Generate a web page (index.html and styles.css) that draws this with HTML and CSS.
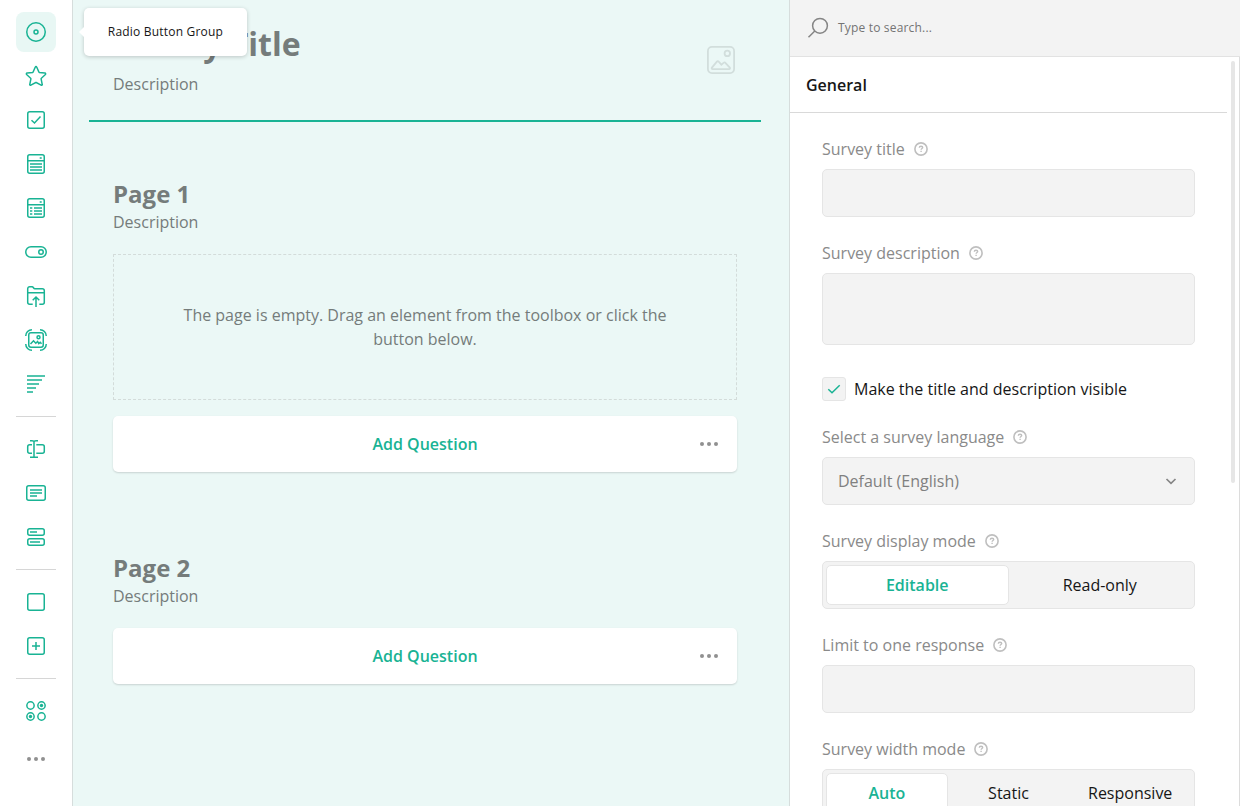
FILE: index.html
```html
<!DOCTYPE html>
<html lang="en">
<head>
<meta charset="utf-8">
<title>Survey Creator</title>
<link rel="stylesheet" href="styles.css">
</head>
<body>
<svg class="symbols" aria-hidden="true">
  <symbol id="help" viewBox="0 0 14 14"><circle cx="7" cy="7" r="6.1" stroke-width="1.6"/><path d="M5.3 5.8C5.3 4.7 6 4.2 7 4.2s1.7.5 1.7 1.3c0 1-1.6 1.1-1.6 2.3M7.1 8.8v1.3" stroke-width="1.4"/></symbol>
  <symbol id="dots" viewBox="0 0 24 24"><circle cx="5" cy="12" r="2"/><circle cx="12" cy="12" r="2"/><circle cx="19" cy="12" r="2"/></symbol>
</svg>
<div class="app">
  <nav class="toolbox">
    <a class="tool tool--active"><svg class="icon" viewBox="0 0 24 24"><circle cx="12" cy="12" r="9.25"/><circle cx="12" cy="12" r="2"/></svg>
      <span class="tooltip">Radio Button Group</span></a>
    <a class="tool"><svg class="icon" viewBox="0 0 24 24"><path d="M12 2.6c.3 0 .6.2.7.5l2.2 5 .5.4 5.5.6c.8.1 1 .9.5 1.4l-4.1 3.8-.2.6 1.1 5.4c.2.7-.5 1.2-1.1.9l-4.8-2.7h-.6l-4.8 2.7c-.6.3-1.3-.2-1.1-.9l1.1-5.4-.2-.6-4.1-3.8c-.5-.5-.3-1.3.5-1.4l5.5-.6.5-.4 2.2-5c.1-.3.4-.5.7-.5z"/></svg></a>
    <a class="tool"><svg class="icon" viewBox="0 0 24 24"><rect x="3.75" y="3.75" width="16.5" height="16.5" rx="2"/><path d="M7.5 12.2l3 2.8 6-6.5"/></svg></a>
    <a class="tool"><svg class="icon" viewBox="0 0 24 24"><rect x="3.75" y="2.75" width="16.5" height="18.5" rx="2"/><path d="M4 8.75h16M6 12h12M6 15h12M6 18h12M15.7 6h2"/></svg></a>
    <a class="tool"><svg class="icon" viewBox="0 0 24 24"><rect x="3.75" y="2.75" width="16.5" height="18.5" rx="2"/><path d="M4 8.75h16M6 12h2.3M10 12h8M6 15h2.3M10 15h8M6 18h2.3M10 18h8M15.7 6h2"/></svg></a>
    <a class="tool"><svg class="icon" viewBox="0 0 24 24"><rect x="1.75" y="6.75" width="20.5" height="10.5" rx="5.25"/><circle cx="17" cy="12" r="2.25"/></svg></a>
    <a class="tool"><svg class="icon" viewBox="0 0 24 24"><path d="M8.7 20.25h-3a2 2 0 0 1-2-2V4.75a2 2 0 0 1 2-2h2.4c1.4 0 1.3 2 2.7 2h7.5a2 2 0 0 1 2 2v11.5a2 2 0 0 1-2 2h-3M4 8.75h16M12 23V13.3M8.7 16.2L12 13l3.3 3.2"/></svg></a>
    <a class="tool"><svg class="icon" viewBox="0 0 24 24"><rect x="4.75" y="4.75" width="14.5" height="14.5" rx="2.2"/><circle cx="14.5" cy="9.3" r="1.5"/><path d="M6.5 16l3-3.2 2.3 2.4 1.8-1.7 1.1 2 1.5-1.2 1.3 1.5M1.75 8a6.2 6.2 0 0 1 6.2-6.25M16 1.75A6.2 6.2 0 0 1 22.25 8M22.25 16A6.2 6.2 0 0 1 16 22.25M8 22.25A6.2 6.2 0 0 1 1.75 16"/></svg></a>
    <a class="tool"><svg class="icon icon--bars" viewBox="0 0 24 24"><path d="M3 4h18M3 8h15M3 12h12M3 16h9M3 20h6"/></svg></a>
    <hr class="divider">
    <a class="tool"><svg class="icon" viewBox="0 0 24 24"><path d="M10 4v16M6 3.75h2c1.2 0 2 .5 2 1 0-.5.8-1 2-1h2M6 20.25h2c1.2 0 2-.5 2-1 0 .5.8 1 2 1h2M8 7.75H5.7a2 2 0 0 0-2 2v4.5a2 2 0 0 0 2 2H8M12.3 7.75h6a2 2 0 0 1 2 2v4.5a2 2 0 0 1-2 2h-6"/></svg></a>
    <a class="tool"><svg class="icon" viewBox="0 0 24 24"><rect x="2.75" y="4.75" width="18.5" height="14.5" rx="2"/><path d="M6 9h12M6 12h12M6 15h7"/></svg></a>
    <a class="tool"><svg class="icon" viewBox="0 0 24 24"><rect x="3.75" y="3.75" width="16.5" height="6.5" rx="2"/><rect x="3.75" y="13.75" width="16.5" height="6.5" rx="2"/><path d="M6 7h7M6 17h10"/></svg></a>
    <hr class="divider">
    <a class="tool"><svg class="icon" viewBox="0 0 24 24"><rect x="3.75" y="3.75" width="16.5" height="16.5" rx="2"/></svg></a>
    <a class="tool"><svg class="icon" viewBox="0 0 24 24"><rect x="3.75" y="3.75" width="16.5" height="16.5" rx="2"/><path d="M8 12h8M12 8v8"/></svg></a>
    <hr class="divider">
    <a class="tool"><svg class="icon" viewBox="0 0 24 24"><g><circle cx="6.5" cy="6.5" r="3.65"/><circle cx="17.5" cy="6.5" r="3.65"/><circle cx="6.5" cy="17.5" r="3.65"/><circle cx="17.5" cy="17.5" r="3.65"/></g><circle class="solid" cx="17.5" cy="6.5" r="1.7"/><circle class="solid" cx="6.5" cy="17.5" r="1.7"/></svg></a>
    <a class="tool tool--more"><svg class="icon dots"><use href="#dots"/></svg></a>
  </nav>

  <main class="designer">
    <header class="survey-header">
      <div>
        <h1 class="survey-title">Survey Title</h1>
        <p class="description">Description</p>
      </div>
      <svg class="logo" viewBox="0 0 28 28"><rect x=".9" y=".9" width="26.2" height="26.2" rx="4"/><circle cx="20.3" cy="7.4" r="2.7"/><path d="M5.6 23.1c-.8 0-1.2-.8-.7-1.4l5-6c.5-.6 1.3-.6 1.8 0l2.7 3 2.4-2c.5-.5 1.2-.4 1.6.1l4.4 4.9c.5.6.1 1.4-.7 1.4z"/></svg>
    </header>

    <section class="page">
      <h2 class="page-title">Page 1</h2>
      <p class="description">Description</p>
      <div class="empty-page">The page is empty. Drag an element from the toolbox or click the button below.</div>
      <button class="add-question"><span>Add Question</span><svg class="icon dots add-more"><use href="#dots"/></svg></button>
    </section>

    <section class="page">
      <h2 class="page-title">Page 2</h2>
      <p class="description">Description</p>
      <button class="add-question add-question--first"><span>Add Question</span><svg class="icon dots add-more"><use href="#dots"/></svg></button>
    </section>
  </main>

  <aside class="properties">
    <div class="search">
      <svg class="search-icon" viewBox="0 0 24 24"><circle cx="14" cy="9.8" r="7.4"/><path d="M8.8 15L2.5 21.3"/></svg>
      <span>Type to search...</span>
    </div>
    <div class="panel">
      <h3 class="panel-title">General</h3>
      <div class="fields">
        <div class="field"><label class="label">Survey title<svg class="help"><use href="#help"/></svg></label><div class="input"></div></div>
        <div class="field"><label class="label">Survey description<svg class="help"><use href="#help"/></svg></label><div class="input input--area"></div></div>
        <div class="check"><span class="check-box"><svg class="icon" viewBox="0 0 24 24"><path d="M6.3 12.2l3.7 3.5 7.7-7.4"/></svg></span>Make the title and description visible</div>
        <div class="field"><label class="label">Select a survey language<svg class="help"><use href="#help"/></svg></label>
          <div class="input input--select"><span>Default (English)</span><svg class="chevron" viewBox="0 0 16 16"><path d="M3.5 6L8 10.3 12.5 6"/></svg></div></div>
        <div class="field"><label class="label">Survey display mode<svg class="help"><use href="#help"/></svg></label>
          <div class="input segments"><span class="segment segment--on">Editable</span><span class="segment">Read-only</span></div></div>
        <div class="field"><label class="label">Limit to one response<svg class="help"><use href="#help"/></svg></label><div class="input"></div></div>
        <div class="field"><label class="label">Survey width mode<svg class="help"><use href="#help"/></svg></label>
          <div class="input segments"><span class="segment segment--on">Auto</span><span class="segment">Static</span><span class="segment">Responsive</span></div></div>
      </div>
      <div class="scrollbar"></div>
    </div>
  </aside>
</div>
</body>
</html>
```
FILE: styles.css
```css
* { box-sizing: border-box; }
body {
  margin: 0;
  overflow: hidden;
  font: 16px/24px "Open Sans", sans-serif;
  color: #161616;
}
h1, h2, h3, p { margin: 0; }
.symbols { position: absolute; width: 0; height: 0; }

.app {
  display: grid;
  grid-template-columns: 73px 716px 451px;
  height: 806px;
}

/* Toolbox */
.toolbox {
  display: flex;
  flex-direction: column;
  gap: 4px;
  padding: 12px 16px;
  background: #fff;
  border-right: 1px solid #d6dddc;
}
.tool {
  position: relative;
  display: flex;
  flex: none;
  align-items: center;
  justify-content: center;
  width: 40px;
  height: 40px;
  border-radius: 8px;
}
.tool--active { background: #e8f7f4; }
.tool--more { margin-top: 4px; }
.icon {
  width: 24px;
  height: 24px;
  fill: none;
  stroke: #19b394;
  stroke-width: 1.5;
}
.icon .solid { fill: #19b394; stroke: none; }
.icon--bars { stroke-width: 1.6; }
.dots { fill: #909090; stroke: none; }
.divider {
  width: 40px;
  height: 1px;
  margin: 8px 0;
  border: 0;
  background: #d6d6d6;
}
.tooltip {
  position: absolute;
  z-index: 2;
  left: 68px;
  top: -4px;
  width: 163px;
  height: 48px;
  border-radius: 5px;
  background: #fff;
  box-shadow: 0 1px 4px rgba(0, 0, 0, .2);
  font-size: 12px;
  line-height: 48px;
  letter-spacing: .2px;
  text-align: center;
  white-space: nowrap;
}
.tooltip::before {
  content: "";
  position: absolute;
  left: -5px;
  top: 19px;
  border: 5px solid transparent;
  border-left: 0;
  border-right-color: #fff;
}

/* Design surface */
.designer {
  padding: 0 28px 0 16px;
  background: #ebf8f6;
}
.survey-header {
  display: flex;
  justify-content: space-between;
  height: 122px;
  padding: 24px 26px 0 24px;
  border-bottom: 2px solid #19b394;
}
.survey-title {
  margin-bottom: 8px;
  font-size: 32px;
  line-height: 40px;
  color: #757c7b;
}
.description { color: #757c7b; }
.logo {
  width: 28px;
  height: 28px;
  margin-top: 22px;
  fill: none;
  stroke: #d2dedc;
  stroke-width: 1.8;
}
.page { padding: 56px 24px 24px; }
.page-title {
  font-size: 24px;
  line-height: 32px;
  color: #757c7b;
}
.empty-page {
  height: 146px;
  margin: 20px 0 16px;
  padding: 48px 64px;
  border: 1px dashed #d3dcda;
  color: #757c7b;
  text-align: center;
}
.add-question {
  display: flex;
  align-items: center;
  justify-content: center;
  width: 100%;
  height: 56px;
  padding: 0 16px;
  border: 0;
  border-radius: 5px;
  background: #fff;
  box-shadow: 0 1px 2px rgba(0, 0, 0, .15);
  font: 600 16px/24px "Open Sans", sans-serif;
  color: #19b394;
}
.add-question--first { margin-top: 20px; }
.add-question span { flex: 1; padding-left: 24px; }

/* Property grid */
.properties {
  display: flex;
  flex-direction: column;
  min-height: 0;
  border-left: 1px solid #d6dddc;
  background: #fff;
}
.search {
  display: flex;
  flex: none;
  align-items: center;
  gap: 8px;
  height: 57px;
  padding: 0 16px 1px;
  border-bottom: 1px solid #e2e2e2;
  background: #f3f3f3;
  font-size: 12px;
  letter-spacing: .18px;
  color: #747474;
}
.search-icon {
  width: 24px;
  height: 24px;
  fill: none;
  stroke: #858585;
  stroke-width: 1.5;
}
.panel {
  position: relative;
  flex: 1;
  min-height: 0;
  overflow: hidden;
  border-right: 1px solid #dcdcdc;
}
.panel-title {
  width: 437px;
  height: 56px;
  padding-left: 16px;
  border-bottom: 1px solid #d9d9d9;
  font-size: 16px;
  font-weight: 600;
  line-height: 56px;
}
.fields {
  display: flex;
  flex-direction: column;
  gap: 24px;
  width: 405px;
  padding: 24px 0 0 32px;
}
.label {
  display: flex;
  align-items: center;
  gap: 9px;
  height: 24px;
  margin-bottom: 8px;
  color: #8a8a8a;
}
.help { width: 14px; height: 14px; fill: none; stroke: #bfbfbf; }
.input {
  height: 48px;
  border: 1px solid #e5e5e5;
  border-radius: 5px;
  background: #f3f3f3;
}
.input--area { height: 72px; }
.input--select {
  display: flex;
  align-items: center;
  justify-content: space-between;
  padding: 0 15px;
  color: #808080;
}
.chevron {
  width: 16px;
  height: 16px;
  fill: none;
  stroke: #858585;
  stroke-width: 1.7;
}
.check {
  display: flex;
  align-items: center;
  gap: 8px;
  height: 24px;
  margin-top: 8px;
}
.check-box {
  display: flex;
  align-items: center;
  justify-content: center;
  width: 24px;
  height: 24px;
  border: 1px solid #e5e5e5;
  border-radius: 3px;
  background: #f3f3f3;
}
.check-box .icon { flex: none; }
.segments { display: flex; padding: 3px; }
.segment {
  flex: 1 1 0;
  border: 1px solid transparent;
  border-radius: 5px;
  line-height: 38px;
  text-align: center;
}
.segment--on {
  border-color: #e5e5e5;
  background: #fff;
  color: #19b394;
  font-weight: 600;
}
.scrollbar {
  position: absolute;
  right: 4px;
  top: 4px;
  width: 4px;
  height: 422px;
  border-radius: 2px;
  background: #e6e6e6;
}
```
